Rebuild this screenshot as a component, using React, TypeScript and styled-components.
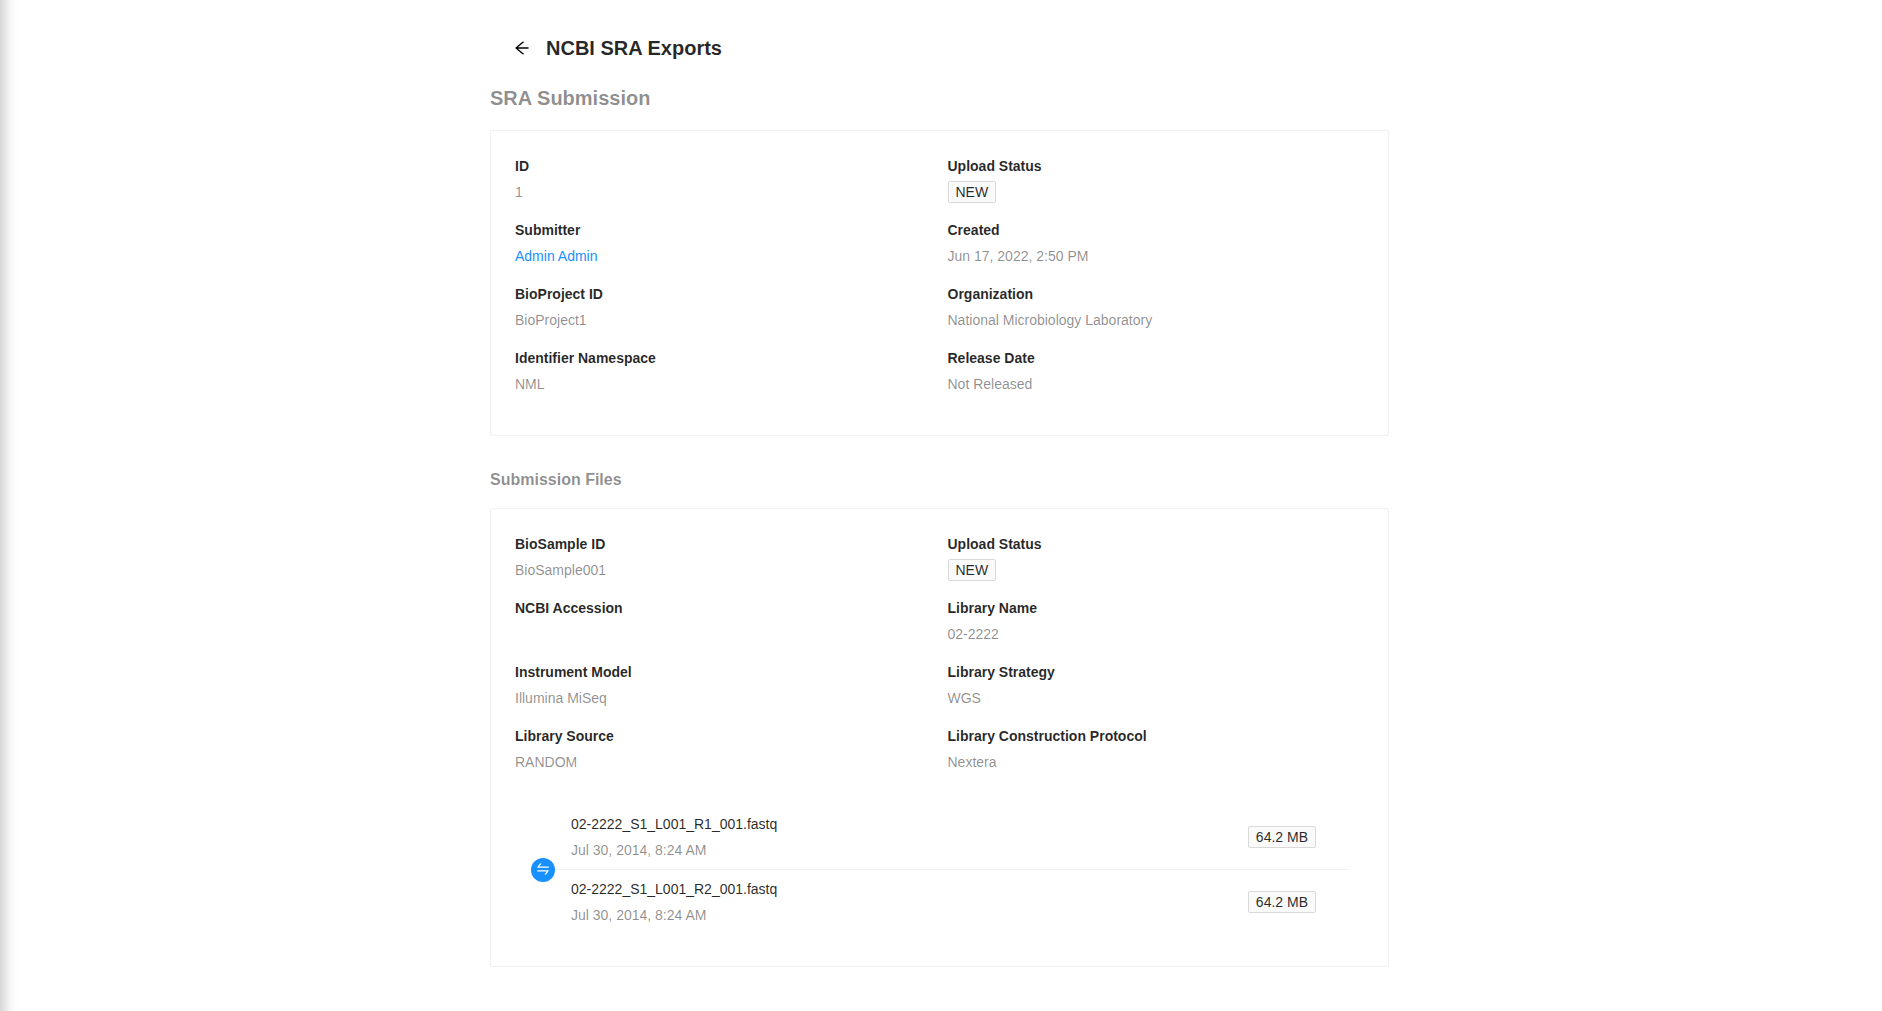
import React from "react";
import styled, { createGlobalStyle } from "styled-components";
import { AiOutlineArrowLeft, AiOutlineSwap } from "react-icons/ai";

const GlobalStyle = createGlobalStyle`
  *, *::before, *::after { box-sizing: border-box; }
  body {
    margin: 0;
    background: #fff;
    color: rgba(0, 0, 0, 0.85);
    font: 14px/22px "Liberation Sans", Arial, sans-serif;
  }
`;

const Layout = styled.div`
  display: flex;
  justify-content: center;
  height: 1011px;
  overflow: hidden;
  padding-right: 3px;
  background: linear-gradient(
    to right,
    #d8d8d8 0,
    #e0e0e0 3px,
    #ececec 7px,
    #f7f7f7 11px,
    #fdfdfd 15px,
    #fff 19px
  ) no-repeat 0 0 / 19px 100%;
`;

const Page = styled.main`
  width: 899px;
  padding-top: 16px;
`;

const PageHeader = styled.header`
  display: flex;
  align-items: center;
  gap: 16px;
  padding: 16px 24px;
`;

const BackButton = styled.button`
  display: flex;
  padding: 0;
  border: 0;
  background: none;
  color: #000;
  font-size: 16px;
`;

const PageTitle = styled.h1`
  margin: 0;
  font-size: 20px;
  line-height: 32px;
  font-weight: 600;
`;

const SectionTitle = styled.h2`
  margin: 4px 0 18px;
  color: rgba(0, 0, 0, 0.45);
  font-size: 20px;
  line-height: 28px;
  font-weight: 600;
`;

const SubsectionTitle = styled.h3`
  margin: 32px 0 16px;
  color: rgba(0, 0, 0, 0.45);
  font-size: 16px;
  line-height: 24px;
  font-weight: 600;
`;

const Card = styled.section`
  padding: 24px;
  border: 1px solid #f0f0f0;
  border-radius: 2px;
`;

const Details = styled.dl`
  display: grid;
  grid-template-columns: 1fr 1fr;
  column-gap: 16px;
  margin: 0;
`;

const Detail = styled.div`
  display: flex;
  flex-direction: column;
  gap: 4px;
  height: 64px;
`;

const Label = styled.dt`
  font-weight: 600;
`;

const Value = styled.dd`
  display: flex;
  margin: 0;
  color: rgba(0, 0, 0, 0.45);
`;

const Link = styled.a`
  color: #1890ff;
  text-decoration: none;
`;

const Tag = styled.span`
  padding: 0 7px;
  border: 1px solid #d9d9d9;
  border-radius: 2px;
  background: #fafafa;
  color: rgba(0, 0, 0, 0.85);
  line-height: 20px;
  white-space: nowrap;
`;

const FileList = styled.div`
  position: relative;
  margin: 16px 16px 8px 28px;
`;

const FileRow = styled.div<{ $divided?: boolean }>`
  display: flex;
  align-items: center;
  justify-content: space-between;
  padding: 8px 32px 8px 28px;
  border-bottom: ${(p) => (p.$divided ? "1px solid #f0f0f0" : "0")};
`;

const FileMeta = styled.div`
  display: flex;
  flex-direction: column;
  gap: 4px;
`;

const FileDate = styled.span`
  color: rgba(0, 0, 0, 0.45);
`;

const PairBadge = styled.span`
  position: absolute;
  top: 53px;
  left: -12px;
  display: flex;
  justify-content: center;
  width: 24px;
  height: 24px;
  padding-top: 4px;
  border-radius: 50%;
  background: #1890ff;
  color: #fff;
  font-size: 14px;
`;

/* Trims the blank margin that the icon glyphs carry inside their 1024 box. */
const ICON_BOX = "64 64 896 896";

type Entry = [string, React.ReactNode];

const submission: Entry[] = [
  ["ID", "1"],
  ["Upload Status", <Tag>NEW</Tag>],
  ["Submitter", <Link>Admin Admin</Link>],
  ["Created", "Jun 17, 2022, 2:50 PM"],
  ["BioProject ID", "BioProject1"],
  ["Organization", "National Microbiology Laboratory"],
  ["Identifier Namespace", "NML"],
  ["Release Date", "Not Released"],
];

const sample: Entry[] = [
  ["BioSample ID", "BioSample001"],
  ["Upload Status", <Tag>NEW</Tag>],
  ["NCBI Accession", ""],
  ["Library Name", "02-2222"],
  ["Instrument Model", "Illumina MiSeq"],
  ["Library Strategy", "WGS"],
  ["Library Source", "RANDOM"],
  ["Library Construction Protocol", "Nextera"],
];

const files = [
  { name: "02-2222_S1_L001_R1_001.fastq", date: "Jul 30, 2014, 8:24 AM", size: "64.2 MB" },
  { name: "02-2222_S1_L001_R2_001.fastq", date: "Jul 30, 2014, 8:24 AM", size: "64.2 MB" },
];

function DetailGrid({ entries }: { entries: Entry[] }) {
  return (
    <Details>
      {entries.map(([label, value]) => (
        <Detail key={label}>
          <Label>{label}</Label>
          <Value>{value}</Value>
        </Detail>
      ))}
    </Details>
  );
}

export default function App() {
  return (
    <>
      <GlobalStyle />
      <Layout>
        <Page>
          <PageHeader>
            <BackButton aria-label="Back">
              <AiOutlineArrowLeft viewBox={ICON_BOX} />
            </BackButton>
            <PageTitle>NCBI SRA Exports</PageTitle>
          </PageHeader>
          <SectionTitle>SRA Submission</SectionTitle>
          <Card>
            <DetailGrid entries={submission} />
          </Card>
          <SubsectionTitle>Submission Files</SubsectionTitle>
          <Card>
            <DetailGrid entries={sample} />
            <FileList>
              {files.map((file, i) => (
                <FileRow key={file.name} $divided={i < files.length - 1}>
                  <FileMeta>
                    <span>{file.name}</span>
                    <FileDate>{file.date}</FileDate>
                  </FileMeta>
                  <Tag>{file.size}</Tag>
                </FileRow>
              ))}
              <PairBadge>
                <AiOutlineSwap viewBox={ICON_BOX} />
              </PairBadge>
            </FileList>
          </Card>
        </Page>
      </Layout>
    </>
  );
}
